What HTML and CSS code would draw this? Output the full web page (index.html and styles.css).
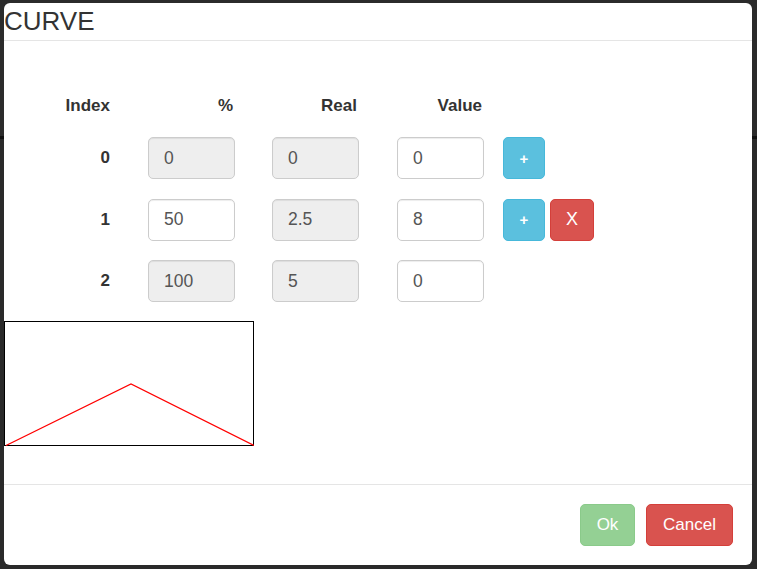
FILE: index.html
```html
<!DOCTYPE html>
<html>
<head>
<meta charset="utf-8">
<link rel="stylesheet" href="styles.css">
</head>
<body>
<div class="modal">
  <div class="modal-header">CURVE</div>
  <div class="modal-body">
    <div class="curve-grid">
      <div class="th">Index</div>
      <div class="th">%</div>
      <div class="th">Real</div>
      <div class="th">Value</div>
      <div class="th"></div>

      <div class="idx">0</div>
      <div class="cell"><input class="field" value="0" disabled></div>
      <div class="cell"><input class="field" value="0" disabled></div>
      <div class="cell"><input class="field" value="0"></div>
      <div class="actions"><button class="btn btn-info">+</button></div>

      <div class="idx">1</div>
      <div class="cell"><input class="field" value="50"></div>
      <div class="cell"><input class="field" value="2.5" disabled></div>
      <div class="cell"><input class="field" value="8"></div>
      <div class="actions"><button class="btn btn-info">+</button><button class="btn btn-danger btn-x">X</button></div>

      <div class="idx">2</div>
      <div class="cell"><input class="field" value="100" disabled></div>
      <div class="cell"><input class="field" value="5" disabled></div>
      <div class="cell"><input class="field" value="0"></div>
      <div class="actions"></div>
    </div>
    <svg class="curve" width="250" height="125" viewBox="0 0 250 125">
      <rect x="0.5" y="0.5" width="249" height="124" fill="#fff" stroke="#000" stroke-width="1"/>
      <polyline points="2,124.5 127,63 251,125" fill="none" stroke="#ff0000" stroke-width="1.2"/>
    </svg>
  </div>
  <div class="modal-footer">
    <button class="btn btn-ok" disabled>Ok</button>
    <button class="btn btn-cancel">Cancel</button>
  </div>
</div>
</body>
</html>
```

FILE: styles.css
```css
html, body {
  margin: 0;
  padding: 0;
}
body {
  width: 757px;
  height: 569px;
  overflow: hidden;
  font-family: "Liberation Sans", Arial, sans-serif;
  color: #333;
  background: linear-gradient(to bottom, #2b2b2b 0, #2b2b2b 136px, #111 136px, #111 139px, #2a2a2a 139px, #2a2a2a 100%);
}
.modal {
  margin: 3px 0 0 4px;
  width: 748px;
  height: 562px;
  background: #fff;
  border-radius: 6px;
  display: flex;
  flex-direction: column;
  overflow: hidden;
}
.modal-header {
  font-size: 26px;
  line-height: 30px;
  padding: 3px 0 4px 0;
  border-bottom: 1px solid #e5e5e5;
  color: #333;
}
.modal-body {
  padding: 55px 0 38px 0;
  flex: 1;
}
.curve-grid {
  margin-left: 56px;
  display: grid;
  grid-template-columns: 50px 125px 124px 125px auto;
  grid-template-rows: 21.5px 42px 42px 42px;
  row-gap: 19.5px;
}
.th {
  font-weight: bold;
  font-size: 17px;
  line-height: 20px;
  text-align: right;
  padding-right: 2px;
}
.th:first-child {
  padding-right: 0;
}
.idx {
  font-weight: bold;
  font-size: 17px;
  display: flex;
  align-items: center;
  justify-content: flex-end;
}
.cell {
  display: flex;
  justify-content: flex-end;
}
.field {
  box-sizing: border-box;
  width: 87px;
  height: 42px;
  margin: 0;
  padding: 0 10px 0 15px;
  border: 1px solid #ccc;
  border-radius: 5px;
  background: #fff;
  color: #555;
  font-family: "Liberation Sans", Arial, sans-serif;
  font-size: 17.5px;
  box-shadow: inset 0 1px 1px rgba(0,0,0,0.075);
  outline: none;
}
.field:disabled {
  background: #eee;
  color: #555;
  -webkit-text-fill-color: #555;
  opacity: 1;
}
.actions {
  display: flex;
  gap: 5px;
  padding-left: 19px;
}
.btn {
  box-sizing: border-box;
  height: 42px;
  margin: 0;
  border-radius: 5px;
  border: 1px solid transparent;
  color: #fff;
  font-family: "Liberation Sans", Arial, sans-serif;
  font-size: 17px;
  padding: 0;
  cursor: pointer;
}
.btn-info {
  width: 42px;
  background: #5bc0de;
  border-color: #46b8da;
  font-size: 15px;
  font-weight: bold;
}
.btn-danger {
  background: #d9534f;
  border-color: #d43f3a;
}
.btn-x {
  width: 44px;
  font-size: 18px;
}
.curve {
  display: block;
  margin-top: 19px;
}
.modal-footer {
  border-top: 1px solid #e5e5e5;
  padding: 19px 19px 19px 0;
  display: flex;
  justify-content: flex-end;
  gap: 11px;
}
.btn-ok {
  width: 55px;
  background: #5cb85c;
  border-color: #4cae4c;
  opacity: 0.65;
  cursor: not-allowed;
}
.btn-cancel {
  width: 87px;
  background: #d9534f;
  border-color: #d43f3a;
}
```
